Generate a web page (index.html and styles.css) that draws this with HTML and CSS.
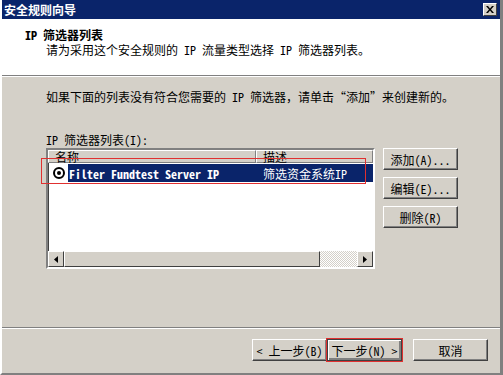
FILE: index.html
```html
<!DOCTYPE html>
<html lang="zh-CN">
<head>
    <meta charset="UTF-8">
    <title>安全规则向导</title>
    <link rel="stylesheet" href="styles.css">
</head>
<body>
    <div class="window">
        <div class="titlebar">
            <span class="title">安全规则向导</span>
            <span class="close">
                <svg width="8" height="7" viewBox="0 0 8 7"><path d="M0 0h2l2 2.5L6 0h2L5 3.5 8 7H6L4 4.5 2 7H0l3-3.5z" fill="#000"/></svg>
            </span>
        </div>

        <div class="header">
            <div class="h-title">IP 筛选器列表</div>
            <div class="h-sub">请为采用这个安全规则的 IP 流量类型选择 IP 筛选器列表。</div>
        </div>

        <div class="content">
            <p class="intro">如果下面的列表没有符合您需要的 IP 筛选器，请单击“添加”来创建新的。</p>
            <div class="label">IP 筛选器列表(I):</div>

            <div class="list-row">
                <div class="listbox">
                    <div class="cols">
                        <div class="col col-name">名称</div>
                        <div class="col col-desc">描述</div>
                    </div>
                    <div class="item">
                        <span class="radio"><span class="dot"></span></span>
                        <span class="sel">
                            <span class="cell-name">Filter Fundtest Server IP</span>
                            <span class="cell-desc">筛选资金系统IP</span>
                        </span>
                    </div>
                    <div class="spacer"></div>
                    <div class="hscroll">
                        <span class="sbtn"><svg width="4" height="7" viewBox="0 0 4 7"><path d="M4 0v7L0 3.5z" fill="#000"/></svg></span>
                        <span class="thumb"></span>
                        <span class="track"></span>
                        <span class="sbtn"><svg width="4" height="7" viewBox="0 0 4 7"><path d="M0 0v7l4-3.5z" fill="#000"/></svg></span>
                    </div>
                    <div class="mark"></div>
                </div>

                <div class="side-buttons">
                    <button class="btn">添加(A)...</button>
                    <button class="btn">编辑(E)...</button>
                    <button class="btn">删除(R)</button>
                </div>
            </div>
        </div>

        <div class="footer">
            <button class="btn">&lt; 上一步(B)</button>
            <button class="btn btn-next">下一步(N) &gt;</button>
            <button class="btn btn-cancel">取消</button>
        </div>
    </div>
</body>
</html>
```

FILE: styles.css
```css
body {
    margin: 0;
    background: #d4d0c8;
    font-family: "Noto Sans Mono CJK SC", "Noto Sans CJK SC", "Liberation Mono", monospace;
    font-size: 12px;
    color: #000;
}
.window {
    width: 503px;
    height: 375px;
    box-sizing: border-box;
    border-left: 2px solid #fff;
    border-right: 3px solid #808080;
    border-bottom: 2px solid #808080;
    display: flex;
    flex-direction: column;
    background: #d4d0c8;
}
.titlebar {
    height: 19px;
    background: #0a246a;
    color: #fff;
    display: flex;
    align-items: center;
    justify-content: space-between;
    padding: 0 3px 0 2px;
}
.title {
    font-weight: bold;
    font-size: 12px;
}
.close {
    width: 14px;
    height: 13px;
    box-sizing: border-box;
    background: #d4d0c8;
    border: 1px solid;
    border-color: #fff #404040 #404040 #fff;
    display: flex;
    align-items: center;
    justify-content: center;
}
.header {
    background: #fff;
    height: 57px;
    box-sizing: border-box;
    padding: 9px 0 0 23px;
    border-bottom: 1px solid #808080;
    box-shadow: 0 1px 0 #fff;
}
.h-title {
    font-weight: bold;
    line-height: 14px;
}
.h-sub {
    margin-left: 21px;
    margin-top: 1px;
    line-height: 14px;
}
.content {
    padding: 14px 0 0 44px;
    height: 252px;
    box-sizing: border-box;
    border-bottom: 1px solid #808080;
    box-shadow: 0 1px 0 #fff;
}
.intro {
    margin: 0;
    line-height: 14px;
}
.label {
    margin-top: 29px;
    line-height: 14px;
}
.list-row {
    display: flex;
    gap: 8px;
    margin-top: 1px;
}
.listbox {
    position: relative;
    width: 329px;
    height: 121px;
    box-sizing: border-box;
    background: #fff;
    border: 2px solid;
    border-color: #808080 #fff #fff #808080;
    display: flex;
    flex-direction: column;
    box-shadow: inset 1px 1px 0 #404040;
}
.cols {
    display: flex;
    height: 13px;
    line-height: 12px;
}
.col {
    background: #d4d0c8;
    box-sizing: border-box;
    border: 1px solid;
    border-color: #fff #808080 #808080 #fff;
    padding-left: 6px;
}
.col-name {
    width: 208px;
}
.col-desc {
    flex: 1;
}
.item {
    display: flex;
    align-items: center;
    height: 18px;
    margin-top: 1px;
    padding-left: 5px;
}
.radio {
    width: 12px;
    height: 12px;
    box-sizing: border-box;
    border: 2px solid #000;
    border-radius: 50%;
    background: #fff;
    display: flex;
    align-items: center;
    justify-content: center;
    margin-right: 3px;
}
.dot {
    width: 4px;
    height: 4px;
    border-radius: 50%;
    background: #000;
}
.sel {
    flex: 1;
    display: flex;
    background: #0a246a;
    color: #fff;
    height: 18px;
    align-items: center;
}
.cell-name {
    width: 193px;
    font-weight: bold;
    padding-left: 1px;
}
.cell-desc {
    padding-left: 1px;
}
.spacer {
    flex: 1;
}
.hscroll {
    display: flex;
    height: 16px;
}
.sbtn {
    width: 16px;
    box-sizing: border-box;
    background: #d4d0c8;
    border: 1px solid;
    border-color: #fff #404040 #404040 #fff;
    display: flex;
    align-items: center;
    justify-content: center;
}
.thumb {
    width: 256px;
    background: #d4d0c8;
    box-sizing: border-box;
    border: 1px solid;
    border-color: #fff #404040 #404040 #fff;
}
.track {
    flex: 1;
    background-image: repeating-conic-gradient(#d4d0c8 0 25%, #fff 0 50%);
    background-size: 2px 2px;
}
.mark {
    position: absolute;
    left: -7px;
    top: 8px;
    width: 323px;
    height: 24px;
    border: 1px solid #e03030;
    pointer-events: none;
}
.side-buttons {
    display: flex;
    flex-direction: column;
    gap: 7px;
}
.btn {
    width: 75px;
    height: 22px;
    font-family: inherit;
    font-size: 12px;
    color: #000;
    background: #d4d0c8;
    border: 1px solid;
    border-color: #fff #404040 #404040 #fff;
    box-shadow: inset -1px -1px 0 #808080;
    padding: 0;
}
.footer {
    display: flex;
    justify-content: flex-end;
    align-items: flex-start;
    padding: 11px 12px 0 0;
}
.btn-next {
    border-color: #404040;
    box-shadow: inset 1px 1px 0 #fff, inset -2px -2px 0 #808080;
    outline: 1px solid #e03030;
}
.btn-cancel {
    margin-left: 11px;
}
```
